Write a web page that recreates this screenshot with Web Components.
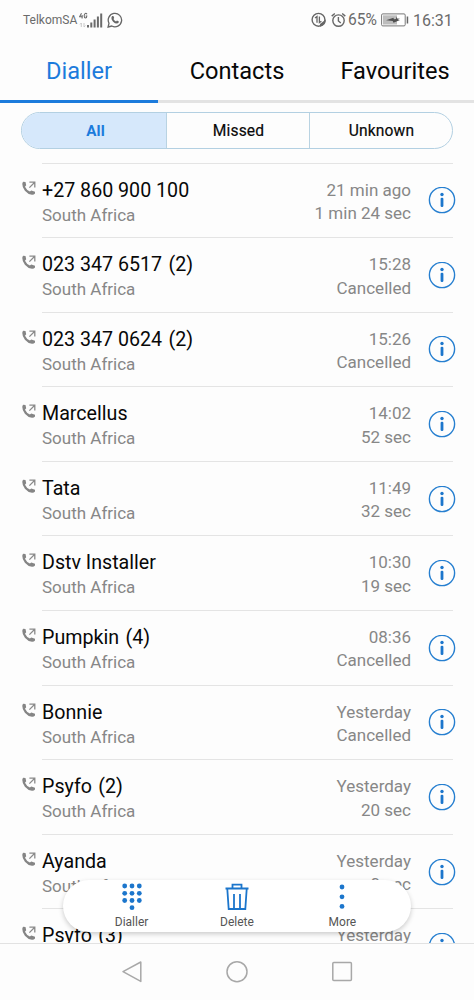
<!DOCTYPE html>
<html lang="en">
<head>
<meta charset="utf-8">
<title>Dialler</title>
<style>
html,body{margin:0;height:100%;background:#fdfdfd;font-family:Roboto,"Liberation Sans",sans-serif;overflow:hidden}
</style>
</head>
<body>
<dialler-app></dialler-app>
<script>
const define = (name, html, init) => customElements.define(name, class extends HTMLElement {
  constructor() {
    super();
    const t = document.createElement('template');
    t.innerHTML = html;
    this.attachShadow({mode: 'open'}).append(t.content.cloneNode(true));
  }
  connectedCallback() { if (init) init(this, this.shadowRoot); }
});

define('status-bar', `
<style>
:host{display:flex;align-items:center;height:40px;box-sizing:border-box;padding:0 22px 0 23px;color:#6b6b6b;font-size:14px}
.carrier{font-size:12px;width:55px;white-space:nowrap}
svg{display:block;flex:none}
.signal{margin-left:1px}.wa{margin-left:4px}
.grow{flex:1}
.alarm{margin:0 2px 0 4px}.pct{width:30px;white-space:nowrap;font-size:15.6px}
.bat{margin:0 4px 0 3px}.time{font-size:16px;width:39px;white-space:nowrap}
</style>
<span class="carrier">TelkomSA</span>
<svg class="signal" width="24" height="17" viewBox="0 0 24 17" fill="#6b6b6b">
<path d="M2.5 1.2L.6 4.8H3.8M3.1 3V6.4M8 2.2Q7.3 1.2 6.3 1.5Q5.2 1.8 5.2 3.8Q5.2 6 6.5 6Q7.8 6 7.8 4H6.6" fill="none" stroke="#6b6b6b" stroke-width="1.1"/>
<path d="M2.3 15V11L1 12.4M5 11V15L6.5 13.6" fill="none" stroke="#c4c4c4" stroke-width=".9"/>
<path d="M8 13h2v2.5H8zM11.3 10.5h2v5h-2zM14.6 7.5h2v8h-2zM17.9 4.5h2v11h-2zM21.2 1.5h2v14h-2z"/></svg>
<svg class="wa" width="16" height="16" viewBox="0 0 16 16"><path d="M1.1 15L2 11.2A6.7 6.7 0 1 1 4.8 14Z" fill="none" stroke="#666" stroke-width="1.3"/><path d="M5.3 4.1L6.4 4 7.2 6 6.5 7Q7.3 8.8 9 9.5L10 8.6 11.9 9.5Q11.8 11.4 10 11.6Q7.9 11.5 6.1 9.7Q4.3 7.8 4.4 6Q4.5 4.6 5.3 4.1Z" fill="#666"/></svg>
<span class="grow"></span>
<svg width="16" height="16" viewBox="0 0 16 16"><circle cx="7.5" cy="7.8" r="6.4" fill="none" stroke="#666" stroke-width="1.4"/><path d="M4 6L6 4.5V10.8M8.4 4.5V10.5L10.4 9.2" fill="none" stroke="#666" stroke-width="1.3"/><path d="M9 14.8V12l5.8-4.5q.5 6-5.8 7.3z" fill="#666"/></svg>
<svg class="alarm" width="15" height="16" viewBox="0 0 15 16" fill="none" stroke="#666" stroke-width="1.4"><circle cx="7.5" cy="8.6" r="5.7"/><path d="M.7 4.1L3.8 1.5M14.3 4.1L11.2 1.5M7.4 5v4l2.4 2"/></svg>
<span class="pct">65%</span>
<svg class="bat" width="28" height="14" viewBox="0 0 28 14"><rect x=".6" y=".9" width="23.6" height="12" rx="1.2" fill="#fff" stroke="#777"/><path d="M2 2.3h14v9.2H2z" fill="#bdbdbd"/><path d="M5 7.3L12.5 4.8 12.9 6.2 15 6 15.4 3.5 16.2 5.5 19 5.8 16.5 6.8 19 7 12.5 9.8 11.7 8z" fill="#505050"/><path d="M25.7 3.5h1.5v7h-1.5z" fill="#666"/></svg>
<span class="time">16:31</span>`);

define('tab-item', `
<style>
:host{display:flex;justify-content:center;align-items:center;flex:1;min-width:0;height:60px;padding:0 0 2px 0;box-sizing:border-box;border-bottom:3px solid #e3e3e3;font-size:23.6px;color:#080808;white-space:nowrap}
:host([active]){color:#1c7bdc;border-color:#1c7bdc}
</style><slot></slot>`);
define('tab-bar', `<style>:host{display:flex;padding-top:3px}</style><slot></slot>`);

define('filter-option', `
<style>
:host{display:flex;flex:1;align-items:center;justify-content:center;color:#080808;font-size:15.6px;letter-spacing:.15px;padding:1px 0 0 1px;box-sizing:border-box;-webkit-text-stroke:.2px #111;border-left:1px solid #b9d3e2}
:host(:first-child){border-left:0;padding-left:3px}
:host([active]){background:#d6e8fb;color:#1c7bdc;font-weight:700;font-size:15.2px;-webkit-text-stroke:0}
</style><slot></slot>`);
define('filter-bar', `<style>:host{display:flex;height:37px;box-sizing:border-box;margin:9px 21px 13.5px;border:1px solid #b3d0e2;border-radius:19px;overflow:hidden}</style><slot></slot>`);

define('call-row', `
<style>
:host{display:flex;height:74.6px;box-sizing:border-box;padding-left:21px}
.dir{flex:none;margin:18px 6px 0 1px}
.body{display:flex;flex:1;margin-right:21px;border-top:1px solid #e4e4e4}
.left{flex:1;padding-top:14px}
.name{font-size:19.65px;line-height:26px;color:#080808;white-space:pre}
.count{margin-left:1.5px}
.place,.meta{font-size:17px;line-height:22px;color:#878787;white-space:nowrap}
.meta{text-align:right;line-height:23.4px;padding-top:15px}
.info{flex:none;margin:23.8px -3.3px 0 17.3px}
</style>
<svg class="dir" width="14" height="15" viewBox="0 0 14 15"><path d="M1.2.7L3.5.9 4.2 4.3 3 5.7Q4.5 9 7.9 10.6L9.3 9.5 13 10.8V12.5Q11.8 14 10 13.8Q5.8 13.2 2.9 9.7Q.2 6.3.3 2.9Q.3 1.5 1.2.7Z" fill="#858585"/><path d="M7.4 1.2H12.8V6.6M12.5 1.5L7.4 6.6" fill="none" stroke="#8a8a8a" stroke-width="1.3"/></svg>
<div class="body"><div class="left"><div class="name"></div><div class="place"></div></div>
<div class="meta"><div class="when"></div><div class="dur"></div></div>
<svg class="info" width="28" height="28" viewBox="0 0 28 28"><circle cx="14" cy="13" r="12.6" fill="none" stroke="#267fd0" stroke-width="1.4"/><circle cx="14" cy="7.5" r="1.7" fill="#1c76cc"/><rect x="12.6" y="10.7" width="2.8" height="9.2" rx="1.2" fill="#1c76cc"/></svg></div>`,
(el, r) => {
  const name = r.querySelector('.name');
  name.textContent = el.getAttribute('name');
  if (el.hasAttribute('count')) {
    const c = document.createElement('span');
    c.className = 'count';
    c.textContent = ' (' + el.getAttribute('count') + ')';
    name.append(c);
  }
  r.querySelector('.place').textContent = el.getAttribute('place') ?? 'South Africa';
  r.querySelector('.when').textContent = el.getAttribute('when');
  r.querySelector('.dur').textContent = el.getAttribute('duration');
});

define('action-item', `
<style>
:host{display:flex;flex-direction:column;align-items:center;width:105.4px;font-size:12px;color:#555;line-height:14px}
::slotted(svg){display:block;margin-bottom:4px}
</style><slot name="icon"></slot><span><slot></slot></span>`);
define('action-bar', `
<style>
:host{position:absolute;left:63px;bottom:11px;width:348px;height:52px;box-sizing:border-box;padding-top:2px;display:flex;justify-content:center;background:#fff;border-radius:26px;box-shadow:0 2px 5px rgba(0,0,0,.2)}
</style><slot></slot>`);

define('nav-bar', `
<style>:host{display:flex;justify-content:center;gap:81.4px;height:57px;box-sizing:border-box;border-top:1px solid #e2e2e2;padding-top:16px;background:#fdfdfd}svg{display:block}</style>
<svg width="24" height="24" viewBox="0 0 24 24" fill="none" stroke="#a8a8a8" stroke-width="1.5"><path d="M20.8 2V21.4L3 11.7Z" stroke-linejoin="round"/></svg>
<svg width="24" height="24" viewBox="0 0 24 24" fill="none" stroke="#a8a8a8" stroke-width="1.5"><circle cx="12" cy="11.7" r="10"/></svg>
<svg width="24" height="24" viewBox="0 0 24 24" fill="none" stroke="#a8a8a8" stroke-width="1.5"><rect x="2.8" y="2.5" width="18.6" height="18" rx="1"/></svg>`);

define('dialler-app', `
<style>
:host{display:flex;flex-direction:column;width:474px;height:1000px;background:#fdfdfd}
main{flex:1;min-height:0;overflow:hidden;position:relative}
</style>
<status-bar></status-bar>
<tab-bar><tab-item active>Dialler</tab-item><tab-item>Contacts</tab-item><tab-item>Favourites</tab-item></tab-bar>
<main>
<filter-bar><filter-option active>All</filter-option><filter-option>Missed</filter-option><filter-option>Unknown</filter-option></filter-bar>
<call-row name="+27 860 900 100" when="21 min ago" duration="1 min 24 sec"></call-row>
<call-row name="023 347 6517" count="2" when="15:28" duration="Cancelled"></call-row>
<call-row name="023 347 0624" count="2" when="15:26" duration="Cancelled"></call-row>
<call-row name="Marcellus" when="14:02" duration="52 sec"></call-row>
<call-row name="Tata" when="11:49" duration="32 sec"></call-row>
<call-row name="Dstv Installer" when="10:30" duration="19 sec"></call-row>
<call-row name="Pumpkin" count="4" when="08:36" duration="Cancelled"></call-row>
<call-row name="Bonnie" when="Yesterday" duration="Cancelled"></call-row>
<call-row name="Psyfo" count="2" when="Yesterday" duration="20 sec"></call-row>
<call-row name="Ayanda" when="Yesterday" duration="0 sec"></call-row>
<call-row name="Psyfo" count="3" place="" when="Yesterday" duration=""></call-row>
<action-bar>
<action-item><svg slot="icon" width="24" height="29" viewBox="0 0 24 29" fill="#1c76cc"><circle cx="4.7" cy="4" r="2.4"/><circle cx="12" cy="4" r="2.4"/><circle cx="19.3" cy="4" r="2.4"/><circle cx="4.7" cy="11.3" r="2.4"/><circle cx="12" cy="11.3" r="2.4"/><circle cx="19.3" cy="11.3" r="2.4"/><circle cx="4.7" cy="18.5" r="2.4"/><circle cx="12" cy="18.5" r="2.4"/><circle cx="19.3" cy="18.5" r="2.4"/><circle cx="12" cy="25.7" r="2.4"/></svg>Dialler</action-item>
<action-item><svg slot="icon" width="24" height="29" viewBox="0 0 24 29" fill="none" stroke="#1c76cc" stroke-width="1.8"><path d="M.5 6.5H23.5M7.5 6V2.6H16.5V6M2.3 7L3.7 27H20.3L21.7 7M9 12V27M15 12V27"/></svg>Delete</action-item>
<action-item><svg slot="icon" width="24" height="29" viewBox="0 0 24 29" fill="#1c76cc"><circle cx="12" cy="5" r="2.4"/><circle cx="12" cy="14.8" r="2.4"/><circle cx="12" cy="24.4" r="2.4"/></svg>More</action-item>
</action-bar>
</main>
<nav-bar></nav-bar>`);
</script>
</body>
</html>
